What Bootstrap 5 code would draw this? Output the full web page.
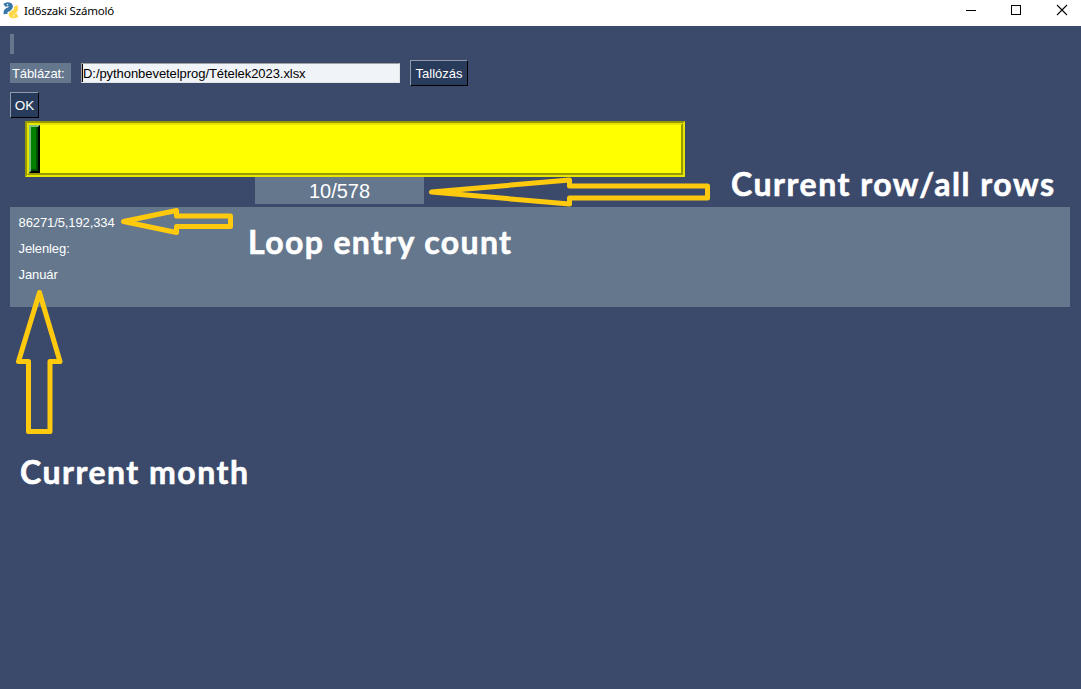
<!DOCTYPE html>
<html lang="hu">
<head>
<meta charset="utf-8">
<meta name="viewport" content="width=device-width, initial-scale=1">
<title>Időszaki Számoló</title>
<link href="https://cdn.jsdelivr.net/npm/bootstrap@5.3.0/dist/css/bootstrap.min.css" rel="stylesheet">
<style>
  body { background: #3b4a6b; font: 13px/20px "Liberation Sans", Arial, sans-serif; color: #fff; }
  .titlebar { height: 26px; background: #fff; color: #000; font: 12px/22px "Noto Sans", sans-serif; padding-left: 3px; }
  .titlebar .caption { font-size: 11.5px; letter-spacing: -.2px; margin-left: 5px; }
  .work { padding: 8px 11px 0 10px; }
  .slate { background: #64778d; }
  .empty-label { width: 4px; height: 20px; }
  .file-row { height: 26px; margin-top: 6px; gap: 10px; }
  .file-label { width: 61px; height: 20px; padding-left: 2px; line-height: 21px; letter-spacing: -.1px; }
  .file-input { width: 319px; height: 20px; padding: 0 0 0 1px; border: 1px solid; border-color: #a0a0a0 #e3e3e3 #e3e3e3 #a0a0a0; border-radius: 0; background: #f0f3f7; color: #000; font: inherit; line-height: 18px; letter-spacing: -.06px; box-shadow: inset 1px 0 #000; }
  .tk-btn { height: 26px; padding: 0; border: 1px solid; border-color: #8f9bad #000 #000 #8f9bad; border-radius: 0; background: #283b5b !important; color: #fff !important; font: inherit; line-height: 25px; }
  .browse { width: 58px; }
  .ok { width: 29px; margin-top: 6px; font-size: 13.5px; }
  .loadbar { width: 660px; height: 56px; margin: 3px 0 0 15px; border-radius: 0; border: 2px solid; border-color: #999900 #e5e500 #e5e500 #999900; background: #ff0; }
  .loadbar-inner { border: 2px solid; border-color: #e5e500 #999900 #999900 #e5e500; }
  .loadbar-fill { width: 11px; height: 48px; border: 2px solid; border-color: #7fbf7f #000 #000 #7fbf7f; background: #008000; box-shadow: inset -2px -2px #004d00; }
  .counter { width: 169px; height: 27px; margin-left: 245px; font-size: 20px; line-height: 28px; }
  .status { height: 100px; margin-top: 3px; padding: 6px 8.5px; letter-spacing: -.1px; }
  .status div { height: 26px; }
  .notes { width: 1081px; height: 689px; pointer-events: none; }
  .notes text { font-family: Lato, sans-serif; font-weight: 700; font-size: 32px; fill: #fff; stroke: #fff; stroke-width: .6; }
  .notes path { fill: none; stroke: #ffc90e; stroke-width: 5; stroke-linejoin: round; }
</style>
</head>
<body class="vh-100 overflow-hidden position-relative">
<header class="titlebar d-flex justify-content-between">
  <div class="d-flex">
    <svg width="16" height="20" viewBox="0 0 16 20" fill="none" stroke-width="4" stroke-linejoin="round">
      <path d="M1.500 5.500Q4 3.500 6.500 4.500Q8.500 5.500 7.500 7.800Q6.500 9.500 4 10Q2.200 10.800 2.600 14" stroke="#3776a6"/>
      <path d="M12.500 6Q14 9 12 11Q11 12 9.500 12.500Q7 13.500 8 15.500Q10 17.500 14.500 15" stroke="#ffd94a"/>
      <circle cx="4.500" cy="4.800" r=".7" fill="#fff"/><circle cx="10.700" cy="16" r=".7" fill="#fff"/>
    </svg>
    <span class="caption">Időszaki Számoló</span>
  </div>
  <svg width="115" height="20" viewBox="966 0 115 20" fill="none" stroke="#000">
    <path d="M966 10.500H976M1011.500 5.500H1020.500V14.500H1011.500Z" shape-rendering="crispEdges"/>
    <path d="M1057 5L1067 15M1067 5L1057 15" stroke-width="1.100"/>
  </svg>
</header>
<main class="work">
  <div class="slate empty-label"></div>
  <div class="file-row d-flex align-items-center">
    <label class="slate file-label" for="path">Táblázat:</label>
    <input id="path" class="form-control file-input" value="D:/pythonbevetelprog/Tételek2023.xlsx">
    <button class="btn tk-btn browse">Tallózás</button>
  </div>
  <button class="btn tk-btn ok d-block">OK</button>
  <div class="progress loadbar"><div class="loadbar-inner w-100"><div class="loadbar-fill"></div></div></div>
  <div class="slate counter text-center">10/578</div>
  <section class="slate status">
    <div>86271/5,192,334</div>
    <div>Jelenleg:</div>
    <div>Január</div>
  </section>
</main>
<svg class="notes position-absolute top-0 start-0" viewBox="0 0 1081 689">
  <path d="M431.500 192L569.500 180V186H707.500V198H569.500V204L431.500 192Z"/>
  <path d="M123.500 221.500L176.500 210.500V216H230.500V226.500H176.500V232.500Z"/>
  <path d="M39.500 292.500L60 361.500H50V431.500H28.500V361.500H18.500Z"/>
  <text x="731" y="196" textLength="323">Current row/all rows</text>
  <text x="248" y="254" textLength="263">Loop entry count</text>
  <text x="20" y="484" textLength="228">Current month</text>
</svg>
<script src="https://cdn.jsdelivr.net/npm/bootstrap@5.3.0/dist/js/bootstrap.bundle.min.js"></script>
</body>
</html>
